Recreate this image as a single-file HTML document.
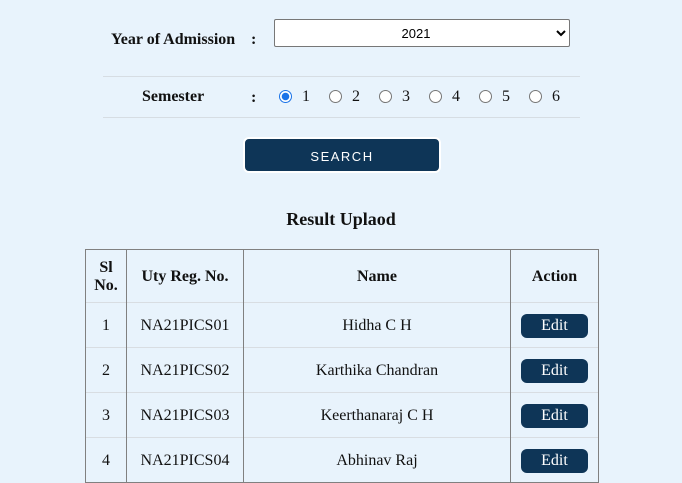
<!DOCTYPE html>
<html><head><style>
body{margin:0;width:682px;height:481px;background:#e8f3fc;font-family:"Liberation Serif",serif;position:relative;overflow:hidden;color:#111}
.a{position:absolute}
.lbl{font-weight:bold;font-size:16px}
select{position:absolute;left:274px;top:19px;width:296px;height:28px;background:#fff;border:1px solid #777;border-radius:2px;font-family:"Liberation Sans",sans-serif;font-size:13px;text-align:center;text-align-last:center}
.hr{position:absolute;left:103px;width:477px;height:1px;background:#d6dde3}
.rad{position:absolute;top:90px;width:11px;height:11px;border:1px solid #777;border-radius:50%;background:#fff}
.num{position:absolute;top:88px;font-size:16px}
.btn{position:absolute;left:243px;top:137px;width:194px;height:32px;background:#0e3557;border:2px solid #fff;border-radius:6px;color:#fff;font-family:"Liberation Sans",sans-serif;font-size:13px;letter-spacing:1.5px;text-align:center;line-height:36px}
table{position:absolute;left:85px;top:249px;border-collapse:collapse;border:1px solid #808080;font-size:16px}
td,th{border-left:1px solid #808080;border-right:1px solid #808080;border-top:1px solid #d8dde2;text-align:center;padding:0}
tr:first-child th{border-top:1px solid #808080}
th{height:51px;line-height:18px;padding-top:1px}
td{height:43px;padding-top:1px}
.e{display:inline-block;width:67px;height:24px;background:#0e3557;color:#fff;border-radius:6px;line-height:24px}
</style></head><body>
<div class="a lbl" style="left:111px;top:31px">Year of Admission</div>
<div class="a lbl" style="left:251px;top:31px">:</div>
<select><option>2021</option></select>
<div class="hr" style="top:76px"></div>
<div class="a lbl" style="left:142px;top:88px">Semester</div>
<div class="a lbl" style="left:251px;top:89px">:</div>
<div class="rad" style="left:279px;border:1px solid #1a73e8;background:radial-gradient(circle,#1a73e8 0 3.5px,#fff 4px)"></div><div class="num" style="left:302px">1</div>
<div class="rad" style="left:329px"></div><div class="num" style="left:352px">2</div>
<div class="rad" style="left:379px"></div><div class="num" style="left:402px">3</div>
<div class="rad" style="left:429px"></div><div class="num" style="left:452px">4</div>
<div class="rad" style="left:479px"></div><div class="num" style="left:502px">5</div>
<div class="rad" style="left:529px"></div><div class="num" style="left:552px">6</div>
<div class="hr" style="top:117px"></div>
<div class="btn">SEARCH</div>
<div class="a" style="left:0;width:682px;top:209px;text-align:center;font-weight:bold;font-size:18px">Result Uplaod</div>
<table>
<tr><th style="width:40px">Sl<br>No.</th><th style="width:116px">Uty Reg. No.</th><th style="width:266px">Name</th><th style="width:87px">Action</th></tr>
<tr><td>1</td><td>NA21PICS01</td><td>Hidha C H</td><td><span class="e">Edit</span></td></tr>
<tr><td>2</td><td>NA21PICS02</td><td>Karthika Chandran</td><td><span class="e">Edit</span></td></tr>
<tr><td>3</td><td>NA21PICS03</td><td>Keerthanaraj C H</td><td><span class="e">Edit</span></td></tr>
<tr><td>4</td><td>NA21PICS04</td><td>Abhinav Raj</td><td><span class="e">Edit</span></td></tr>
</table>
</body></html>
